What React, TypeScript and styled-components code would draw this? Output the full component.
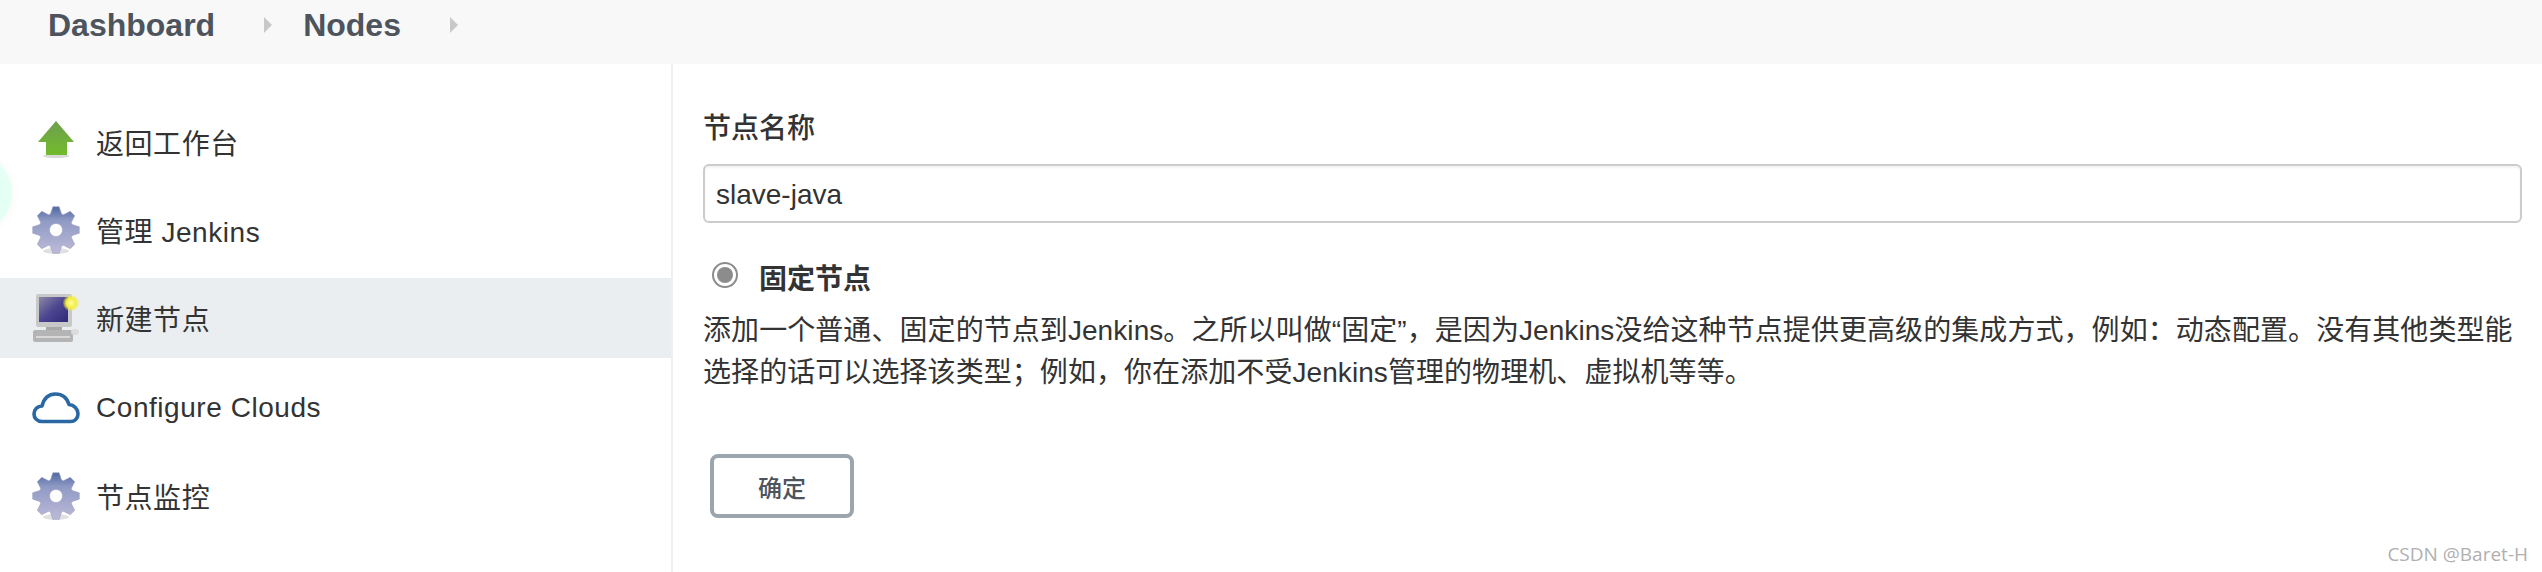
import styled, { createGlobalStyle } from 'styled-components'

const FONT = `"Liberation Sans", "Noto Sans CJK SC", sans-serif`

// fullwidth punctuation kept as escapes so it survives editing
const COMMA = '\uFF0C'
const COLON = '\uFF1A'
const SEMI = '\uFF1B'
const DESCRIPTION =
  `添加一个普通、固定的节点到Jenkins。之所以叫做“固定”${COMMA}是因为Jenkins没给这种节点提供更高级的集成方式${COMMA}例如${COLON}动态配置。没有其他类型能` +
  `选择的话可以选择该类型${SEMI}例如${COMMA}你在添加不受Jenkins管理的物理机、虚拟机等等。`

const GlobalStyle = createGlobalStyle`
  html, body {
    margin: 0;
    height: 572px;
    overflow: hidden;
    background: #fff;
  }
`

const Page = styled.div`
  position: relative;
  width: 2542px;
  height: 572px;
  overflow: hidden;
  font-family: ${FONT};
  font-size: 28px;
  color: #333;
`

const Header = styled.header`
  display: flex;
  align-items: center;
  box-sizing: border-box;
  height: 64px;
  padding: 0 0 14px 48px;
  background: #f8f8f8;
`

const Crumb = styled.span`
  font-size: 32px;
  font-weight: 700;
  color: #4d545d;
`

const CrumbArrow = styled.span`
  width: 0;
  height: 0;
  margin: 0 31px 0 49px;
  border-top: 8px solid transparent;
  border-bottom: 8px solid transparent;
  border-left: 8px solid #c8c8c8;
`

const Body = styled.div`
  display: flex;
  height: 508px;
`

const Sidebar = styled.nav`
  display: flex;
  flex-direction: column;
  gap: 8px;
  box-sizing: border-box;
  width: 673px;
  padding-top: 38px;
  border-right: 2px solid #edf0f2;
`

const SideRow = styled.a<{ $active?: boolean }>`
  display: flex;
  align-items: center;
  gap: 16px;
  height: 80px;
  padding-left: 32px;
  margin-bottom: ${p => (p.$active ? '2px' : '0')};
  background: ${p => (p.$active ? '#eaeef1' : 'transparent')};
  color: #333;
  letter-spacing: 0.55px;
`

const IconBox = styled.svg`
  flex: none;
  width: 48px;
  height: 48px;
`

const Main = styled.main`
  flex: 1;
  display: flex;
  flex-direction: column;
  align-items: flex-start;
  padding: 44px 20px 0 30px;
`

const FieldLabel = styled.label`
  line-height: 42px;
  font-weight: 500;
  color: #333;
`

const NameInput = styled.input`
  box-sizing: border-box;
  width: 100%;
  height: 59px;
  margin-top: 14px;
  padding: 3px 11px 0;
  border: 2px solid #ccc;
  border-radius: 6px;
  box-shadow: inset 0 2px 2px rgba(0, 0, 0, 0.05);
  font-family: ${FONT};
  font-size: 28px;
  color: #333;
  outline: none;
`

const RadioRow = styled.div`
  display: flex;
  align-items: center;
  gap: 21px;
  height: 42px;
  margin-top: 34px;
  padding-left: 9px;
`

const RadioMark = styled.span`
  display: grid;
  place-items: center;
  box-sizing: border-box;
  width: 26px;
  height: 26px;
  border: 2px solid #8c8c8c;
  border-radius: 50%;
  margin-top: -6px;
  &::after {
    content: '';
    width: 16px;
    height: 16px;
    border-radius: 50%;
    background: #8c8c8c;
  }
`

const RadioLabel = styled.span`
  margin-top: -2px;
  font-weight: 700;
  color: #333;
`

const Description = styled.p`
  margin: 11px 0 0;
  line-height: 42px;
  letter-spacing: 0.07px;
  color: #333;
`

const SubmitButton = styled.button`
  box-sizing: border-box;
  width: 144px;
  height: 64px;
  margin: 60px 0 0 7px;
  border: 4px solid #9aa5ad;
  border-radius: 8px;
  background: #fff;
  font-family: ${FONT};
  font-size: 24px;
  font-weight: 500;
  color: #4d545d;
`

const Watermark = styled.span`
  position: absolute;
  right: 14px;
  bottom: 5px;
  font-family: "Open Sans", sans-serif;
  font-size: 19px;
  line-height: 26px;
  color: #b0b0b0;
`

const EdgeBlob = styled.div`
  position: absolute;
  left: -68px;
  top: 153px;
  width: 80px;
  height: 80px;
  border-radius: 50%;
  background: #e4fff4;
  box-shadow: 0 0 12px rgba(0, 0, 0, 0.04);
`

const gearPath = (() => {
  const pts: string[] = []
  const teeth = 8
  for (let i = 0; i < teeth; i++) {
    const a = (i / teeth) * Math.PI * 2 - Math.PI / 2
    const step = (Math.PI * 2) / teeth
    const add = (r: number, t: number) =>
      pts.push(`${(24 + r * Math.cos(a + t * step)).toFixed(2)} ${(24 + r * Math.sin(a + t * step)).toFixed(2)}`)
    add(17, -0.42)
    add(23.5, -0.17)
    add(23.5, 0.17)
    add(17, 0.42)
  }
  return `M${pts.join('L')}Z`
})()

const GearIcon = ({ id }: { id: string }) => (
  <IconBox viewBox="0 0 48 48">
    <defs>
      <linearGradient id={id} x1="0" y1="0" x2="0" y2="1">
        <stop offset="0" stopColor="#4f68a2" />
        <stop offset="0.3" stopColor="#8f9ac4" />
        <stop offset="1" stopColor="#bdbad8" />
      </linearGradient>
    </defs>
    <ellipse cx="24" cy="45" rx="13" ry="3" fill="#000" opacity="0.12" />
    <path d={`${gearPath}M24 17.5a6.5 6.5 0 1 0 0.01 0Z`} fill={`url(#${id})`} fillRule="evenodd" stroke="#9a9dbd" strokeWidth="0.6" />
  </IconBox>
)

const ArrowIcon = () => (
  <IconBox viewBox="0 0 48 48">
    <defs>
      <linearGradient id="arrowFill" x1="0" y1="0" x2="0" y2="1">
        <stop offset="0" stopColor="#6f9f4f" />
        <stop offset="1" stopColor="#72bb2b" />
      </linearGradient>
    </defs>
    <ellipse cx="24" cy="38" rx="13" ry="2" fill="#000" opacity="0.15" />
    <path d="M24 3L42 24H35V37H14V24H6Z" fill="url(#arrowFill)" />
  </IconBox>
)

const ComputerIcon = () => (
  <IconBox viewBox="0 0 48 48">
    <defs>
      <linearGradient id="screenFill" x1="0" y1="0" x2="1" y2="1">
        <stop offset="0" stopColor="#8b88a6" />
        <stop offset="0.5" stopColor="#4c4690" />
        <stop offset="1" stopColor="#2e2a78" />
      </linearGradient>
      <radialGradient id="glowFill">
        <stop offset="0" stopColor="#fffbb0" />
        <stop offset="0.6" stopColor="#f5ee3a" />
        <stop offset="1" stopColor="#f5ee3a" stopOpacity="0.2" />
      </radialGradient>
    </defs>
    <rect x="4" y="0" width="36" height="33" rx="2" fill="#c8c8c8" />
    <rect x="7" y="3" width="29" height="25" fill="url(#screenFill)" />
    <rect x="14" y="33" width="16" height="3" fill="#a8a8a8" />
    <rect x="1" y="36" width="40" height="12" rx="2" fill="#b4b4b4" />
    <rect x="4" y="42" width="34" height="2" fill="#d8d8d8" />
    <ellipse cx="43" cy="38" rx="4" ry="3" fill="#dcdcdc" />
    <circle cx="39" cy="9" r="8" fill="url(#glowFill)" />
  </IconBox>
)

const CloudIcon = () => (
  <IconBox viewBox="0 0 48 48">
    <path
      d="M10 37.5C5 37.5 2 34 2 30C2 25.5 5.5 22 10 22C12 14 17 10 23.5 10C30 10 35 14 37 20.5C42 21 46 25 46 30C46 34.5 42.5 37.5 38.5 37.5Z"
      fill="none"
      stroke="#2a68a3"
      strokeWidth="3.6"
      strokeLinejoin="round"
    />
  </IconBox>
)

const App = () => (
  <Page>
    <GlobalStyle />
    <Header>
      <Crumb>Dashboard</Crumb>
      <CrumbArrow />
      <Crumb>Nodes</Crumb>
      <CrumbArrow />
    </Header>
    <Body>
      <Sidebar>
        <SideRow>
          <ArrowIcon />
          返回工作台
        </SideRow>
        <SideRow>
          <GearIcon id="gearA" />
          管理 Jenkins
        </SideRow>
        <SideRow $active>
          <ComputerIcon />
          新建节点
        </SideRow>
        <SideRow>
          <CloudIcon />
          Configure Clouds
        </SideRow>
        <SideRow>
          <GearIcon id="gearB" />
          节点监控
        </SideRow>
      </Sidebar>
      <Main>
        <FieldLabel>节点名称</FieldLabel>
        <NameInput type="text" defaultValue="slave-java" />
        <RadioRow>
          <RadioMark />
          <RadioLabel>固定节点</RadioLabel>
        </RadioRow>
        <Description>{DESCRIPTION}</Description>
        <SubmitButton>确定</SubmitButton>
      </Main>
    </Body>
    <EdgeBlob />
    <Watermark>CSDN @Baret-H</Watermark>
  </Page>
)

export default App
